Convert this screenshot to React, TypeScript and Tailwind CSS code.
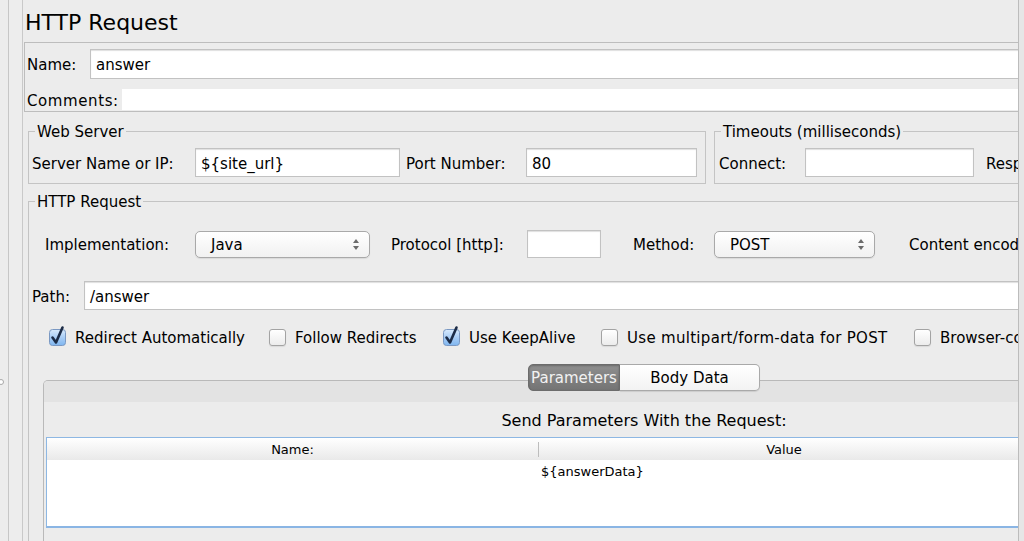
import React from "react";

const inputCls =
  "h-full bg-white border border-[#c2c2c2] shadow-[inset_0_1px_1px_rgba(0,0,0,0.13)] flex items-center pt-[2px]";

function Arrows() {
  return (
    <svg width="8" height="13" viewBox="0 0 8 13" className="shrink-0">
      <path d="M4 1 L7 5 L1 5 Z" fill="#6b6b6b" />
      <path d="M4 12 L7 8 L1 8 Z" fill="#6b6b6b" />
    </svg>
  );
}

function Select({ w, text }: { w: string; text: string }) {
  return (
    <div
      className={`${w} h-[27px] shrink-0 rounded-[5px] border border-[#a9a9a9] bg-linear-to-b from-white to-[#f1f1f1] shadow-[0_1px_1px_rgba(0,0,0,0.08)] flex items-center pl-[15px] pr-[9px] justify-between`}
    >
      <span className="pt-[2px]">{text}</span>
      <Arrows />
    </div>
  );
}

function Check({ checked }: { checked?: boolean }) {
  if (checked) {
    return (
      <svg width="17" height="17" viewBox="0 0 17 17" className="shrink-0 overflow-visible">
        <defs>
          <linearGradient id="cb" x1="0" y1="0" x2="0" y2="1">
            <stop offset="0" stopColor="#d9ebfd" />
            <stop offset="0.5" stopColor="#a9cdf5" />
            <stop offset="1" stopColor="#7fb6f0" />
          </linearGradient>
        </defs>
        <rect x="0.5" y="0.5" width="16" height="16" rx="3" fill="url(#cb)" stroke="#7a98c2" />
        <path d="M3.5 8.5 L7 13.5 L13.5 -1.5" fill="none" stroke="#1c2c47" strokeWidth="2.6" strokeLinecap="round" strokeLinejoin="round" />
      </svg>
    );
  }
  return (
    <div className="w-[17px] h-[17px] shrink-0 rounded-[3px] border border-[#a3a3a3] bg-linear-to-b from-white to-[#ececec] shadow-[0_1px_1px_rgba(0,0,0,0.08)]" />
  );
}

const legendCls = "ml-[6px] px-[2px] h-[18px] pt-[2px] leading-[16px]";

export default function App() {
  return (
    <div className="w-[1024px] h-[541px] overflow-hidden bg-[#ececec] flex font-['DejaVu_Sans',sans-serif] text-[15px] leading-[18px] text-black">
      {/* left tree remainder */}
      <div className="w-[8px] shrink-0 flex flex-col pt-[379px]">
        <div className="w-[6px] h-[6px] -ml-[2px] rounded-full border border-[#a8a8a8] bg-white" />
      </div>
      <div className="w-px shrink-0 bg-[#c6c6c6]" />
      <div className="w-[13px] shrink-0 bg-[#ededed]" />
      <div className="w-px shrink-0 bg-[#c9c9c9]" />

      {/* main content */}
      <div className="w-[995px] shrink-0 overflow-hidden">
        <div className="w-[1250px]">
          {/* Title */}
          <div className="h-[42px] pl-[2px] pt-[10px] text-[22px] leading-[26px]">HTTP Request</div>

          {/* Name / Comments */}
          <div className="ml-[1px] h-[70px] border border-[#bdbdbd]">
            <div className="mt-[6px] h-[30px] flex items-center">
              <div className="w-[65px] shrink-0 pl-[2px] pt-[2px]">Name:</div>
              <div className={`${inputCls} flex-1 pl-[5px]`}>answer</div>
            </div>
            <div className="mt-[10px] h-[21px] flex items-center">
              <div className="w-[97px] shrink-0 pl-[2px] pt-[2px] whitespace-nowrap tracking-[0.6px]">Comments:</div>
              <div className="flex-1 h-full bg-white" />
            </div>
          </div>

          {/* Web Server + Timeouts */}
          <div className="mt-[10px] ml-[5px] flex gap-[8px]">
            <fieldset className="w-[678px] shrink-0 border border-[#c4c4c4] pt-[8px] pb-[6px]">
              <legend className={legendCls}>Web Server</legend>
              <div className="h-[29px] flex items-center pl-[3px]">
                <div className="w-[163px] shrink-0 pt-[2px] whitespace-nowrap">Server Name or IP:</div>
                <div className={`${inputCls} w-[205px] shrink-0 pl-[5px]`}>{"${site_url}"}</div>
                <div className="ml-[6px] w-[120px] shrink-0 pt-[2px] whitespace-nowrap">Port Number:</div>
                <div className={`${inputCls} w-[171px] shrink-0 pl-[5px]`}>80</div>
              </div>
            </fieldset>
            <fieldset className="flex-1 border border-[#c4c4c4] pt-[8px] pb-[6px]">
              <legend className={legendCls}>Timeouts (milliseconds)</legend>
              <div className="h-[29px] flex items-center pl-[4px]">
                <div className="w-[86px] shrink-0 pt-[2px]">Connect:</div>
                <div className={`${inputCls} w-[169px] shrink-0`} />
                <div className="ml-[12px] pt-[2px] whitespace-nowrap">Response:</div>
              </div>
            </fieldset>
          </div>

          {/* HTTP Request */}
          <fieldset className="mt-[8px] ml-[5px] border border-[#c4c4c4] h-[400px]">
            <legend className={legendCls}>HTTP Request</legend>

            <div className="mt-[20px] h-[28px] flex items-center pl-[16px]">
              <div className="w-[150px] shrink-0 pt-[2px] whitespace-nowrap">Implementation:</div>
              <Select w="w-[175px]" text="Java" />
              <div className="ml-[21px] w-[136px] shrink-0 pt-[2px] whitespace-nowrap">Protocol [http]:</div>
              <div className={`${inputCls} w-[74px] shrink-0`} />
              <div className="ml-[32px] w-[81px] shrink-0 pt-[2px]">Method:</div>
              <Select w="w-[161px]" text="POST" />
              <div className="ml-[34px] pt-[2px] whitespace-nowrap">Content encoding:</div>
            </div>

            <div className="mt-[23px] h-[29px] flex items-center pl-[3px]">
              <div className="w-[52px] shrink-0 pt-[2px]">Path:</div>
              <div className={`${inputCls} flex-1 pl-[5px]`}>/answer</div>
            </div>

            <div className="mt-[18px] h-[18px] flex items-center pl-[20px] whitespace-nowrap">
              <div className="w-[220px] shrink-0 flex items-center gap-[9px]">
                <Check checked />
                <span className="pt-[2px]">Redirect Automatically</span>
              </div>
              <div className="w-[174px] shrink-0 flex items-center gap-[9px]">
                <Check />
                <span className="pt-[2px]">Follow Redirects</span>
              </div>
              <div className="w-[158px] shrink-0 flex items-center gap-[9px]">
                <Check checked />
                <span className="pt-[2px]">Use KeepAlive</span>
              </div>
              <div className="w-[313px] shrink-0 flex items-center gap-[9px]">
                <Check />
                <span className="pt-[2px] tracking-[0.3px]">Use multipart/form-data for POST</span>
              </div>
              <div className="shrink-0 flex items-center gap-[9px]">
                <Check />
                <span className="pt-[2px]">Browser-compatible headers</span>
              </div>
            </div>

            {/* Tabbed pane */}
            <div className="mt-[18px] ml-[14px] w-[1202px]">
              <div className="relative z-10 h-[27px] flex justify-center">
                <div className="w-[92px] h-full rounded-l-[5px] border border-[#6c6c6c] bg-linear-to-b from-[#8f8f8f] to-[#747474] text-[#f2f2f2] flex items-center justify-center shadow-[inset_0_1px_2px_rgba(0,0,0,0.25)]">
                  Parameters
                </div>
                <div className="w-[140px] h-full rounded-r-[5px] border border-l-0 border-[#a9a9a9] bg-linear-to-b from-white to-[#f3f3f3] flex items-center justify-center shadow-[0_1px_1px_rgba(0,0,0,0.1)]">
                  Body Data
                </div>
              </div>
              <div className="-mt-[11px] border border-b-0 border-[#b9b9b9] rounded-t-[5px] h-[200px] overflow-hidden">
                <div className="h-[21px] bg-[#e3e3e3]" />
                <div className="h-[35px] pt-[10px] text-center text-[16px] leading-[18px]">Send Parameters With the Request:</div>
                <div className="ml-[2px] w-[984px] border-x border-t border-[#8db7e3] border-b-2 border-b-[#8ab5e4] bg-white text-[13px] leading-[16px]">
                  <div className="h-[22px] flex items-center bg-linear-to-b from-white to-[#e9e9e9]">
                    <div className="w-[491px] shrink-0 text-center pt-[2px]">Name:</div>
                    <div className="w-px h-[15px] bg-[#bdbdbd]" />
                    <div className="flex-1 text-center pt-[2px]">Value</div>
                  </div>
                  <div className="h-[66px]">
                    <div className="h-[21px] flex items-center">
                      <div className="w-[492px] shrink-0" />
                      <div className="pl-[2px] pt-[2px]">{"${answerData}"}</div>
                    </div>
                  </div>
                </div>
              </div>
            </div>
          </fieldset>
        </div>
      </div>

      <div className="w-px shrink-0 bg-[#bcbcbc]" />
      <div className="flex-1 bg-[#e6e6e6]" />
    </div>
  );
}
